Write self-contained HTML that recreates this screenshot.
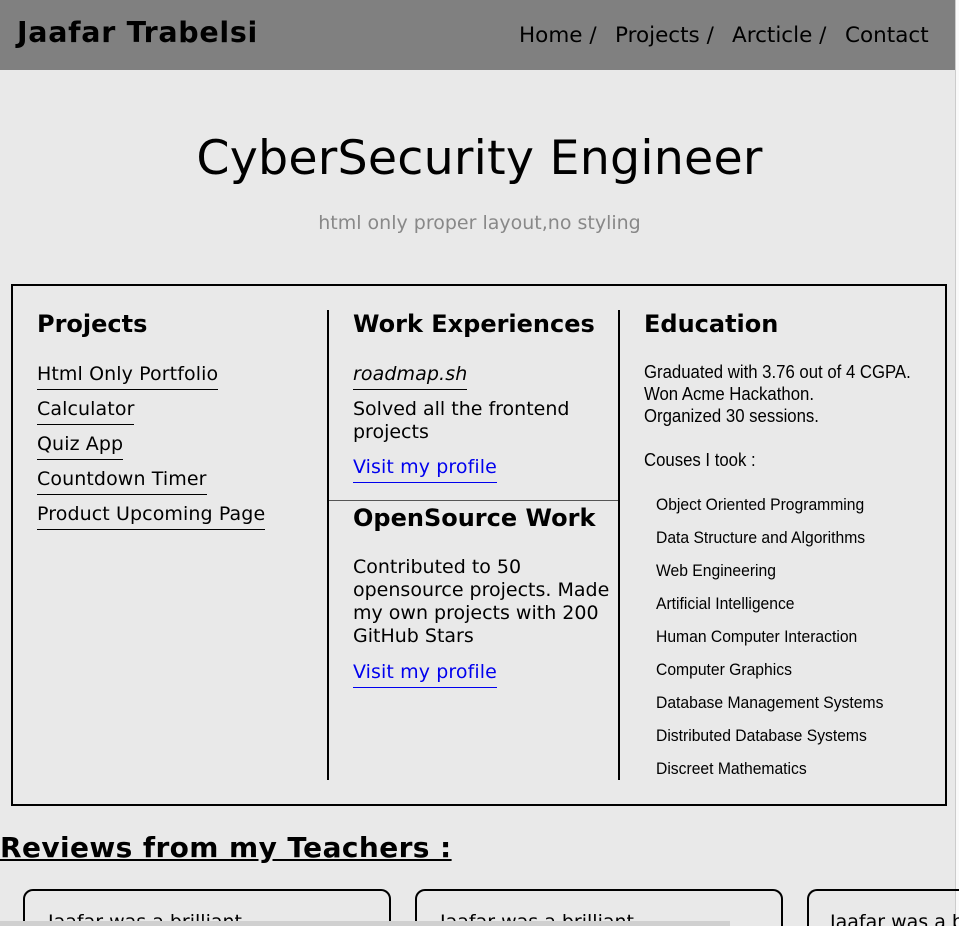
<!DOCTYPE html>
<html><head><style>
html,body{margin:0;height:926px;overflow:hidden}
body{background:#e9e9e9;font-family:"DejaVu Sans",sans-serif;width:959px;position:relative;color:#000}
.hdr{position:absolute;left:0;top:0;width:955px;height:70px;background:#808080}
.hdr .t{position:absolute;left:17px;top:16px;font-size:28.5px;font-weight:bold;letter-spacing:0.7px}
.hdr span{position:absolute;top:23px;font-size:21.5px;white-space:nowrap}
.sb{position:absolute;left:955px;top:0;width:4px;height:926px;background:#fafafa;border-left:1px solid #ccc}
h1{position:absolute;left:0;width:959px;top:131px;margin:0;text-align:center;font-size:47.5px;font-weight:normal;letter-spacing:0.2px}
.sub{position:absolute;left:0;width:959px;top:212px;text-align:center;font-size:19px;color:#888}
.box{position:absolute;left:11px;top:284px;width:932px;height:518px;border:2px solid #000}
.v{position:absolute;top:310px;height:470px;width:2px;background:#000}
.a{position:absolute;font-size:19px;line-height:23px}
.h{position:absolute;font-size:24px;font-weight:bold}
.lk{position:absolute;left:37px;font-size:19px;border-bottom:1px solid #000;padding-bottom:4px;letter-spacing:0.1px}
.ed{position:absolute;left:644px;font-family:"Liberation Sans",sans-serif;font-size:18px;line-height:22px;transform:scaleX(0.93);transform-origin:0 0;white-space:nowrap}
.li{position:absolute;left:656px;font-family:"Liberation Sans",sans-serif;font-size:16.5px;transform:scaleX(0.95);transform-origin:0 0;white-space:nowrap}
.blue{color:#00e;border-bottom:1px solid #00e}
.rv{position:absolute;left:0;top:831px;font-size:28px;font-weight:bold;text-decoration:underline;letter-spacing:0.4px}
.card{position:absolute;top:889px;width:364px;height:60px;border:2px solid #000;border-radius:10px}
.ct{position:absolute;top:911px;font-size:19px;white-space:nowrap}
</style></head><body>
<div class="hdr"><div class="t">Jaafar Trabelsi</div>
<span style="left:519px">Home /</span><span style="left:615px">Projects /</span><span style="left:732px">Arcticle /</span><span style="left:845px">Contact</span></div>
<div class="sb"></div>
<h1>CyberSecurity Engineer</h1>
<div class="sub">html only proper layout,no styling</div>
<div class="box"></div>
<div class="v" style="left:327px"></div>
<div class="v" style="left:618px"></div>
<div style="position:absolute;left:329px;top:500px;width:289px;height:1px;background:#555"></div>
<div class="h" style="left:37px;top:310px">Projects</div>
<div class="lk" style="top:363px">Html Only Portfolio</div>
<div class="lk" style="top:398px">Calculator</div>
<div class="lk" style="top:433px">Quiz App</div>
<div class="lk" style="top:468px">Countdown Timer</div>
<div class="lk" style="top:503px">Product Upcoming Page</div>
<div class="h" style="left:353px;top:310px">Work Experiences</div>
<div class="lk" style="left:353px;top:363px;font-style:italic">roadmap.sh</div>
<div class="a" style="left:353px;top:398px">Solved all the frontend<br>projects</div>
<div class="lk blue" style="left:353px;top:456px">Visit my profile</div>
<div class="h" style="left:353px;top:504px">OpenSource Work</div>
<div class="a" style="left:353px;top:556px;width:265px">Contributed to 50 opensource projects. Made my own projects with 200 GitHub Stars</div>
<div class="lk blue" style="left:353px;top:661px">Visit my profile</div>
<div class="h" style="left:644px;top:310px">Education</div>
<div class="ed" style="top:361px">Graduated with 3.76 out of 4 CGPA.<br>Won Acme Hackathon.<br>Organized 30 sessions.</div>
<div class="ed" style="top:449px">Couses I took :</div>
<div class="li" style="top:496px">Object Oriented Programming</div>
<div class="li" style="top:529px">Data Structure and Algorithms</div>
<div class="li" style="top:562px">Web Engineering</div>
<div class="li" style="top:595px">Artificial Intelligence</div>
<div class="li" style="top:628px">Human Computer Interaction</div>
<div class="li" style="top:661px">Computer Graphics</div>
<div class="li" style="top:694px">Database Management Systems</div>
<div class="li" style="top:727px">Distributed Database Systems</div>
<div class="li" style="top:760px">Discreet Mathematics</div>
<div class="rv">Reviews from my Teachers :</div>
<div class="card" style="left:23px"></div>
<div class="card" style="left:415px"></div>
<div class="card" style="left:807px;width:200px;border-right:none"></div>
<div class="ct" style="left:48px">Jaafar was a brilliant</div>
<div class="ct" style="left:440px">Jaafar was a brilliant</div>
<div class="ct" style="left:830px">Jaafar was a b</div>
<div style="position:absolute;left:0;top:921px;width:730px;height:5px;background:#d0d0d0"></div>
</body></html>
